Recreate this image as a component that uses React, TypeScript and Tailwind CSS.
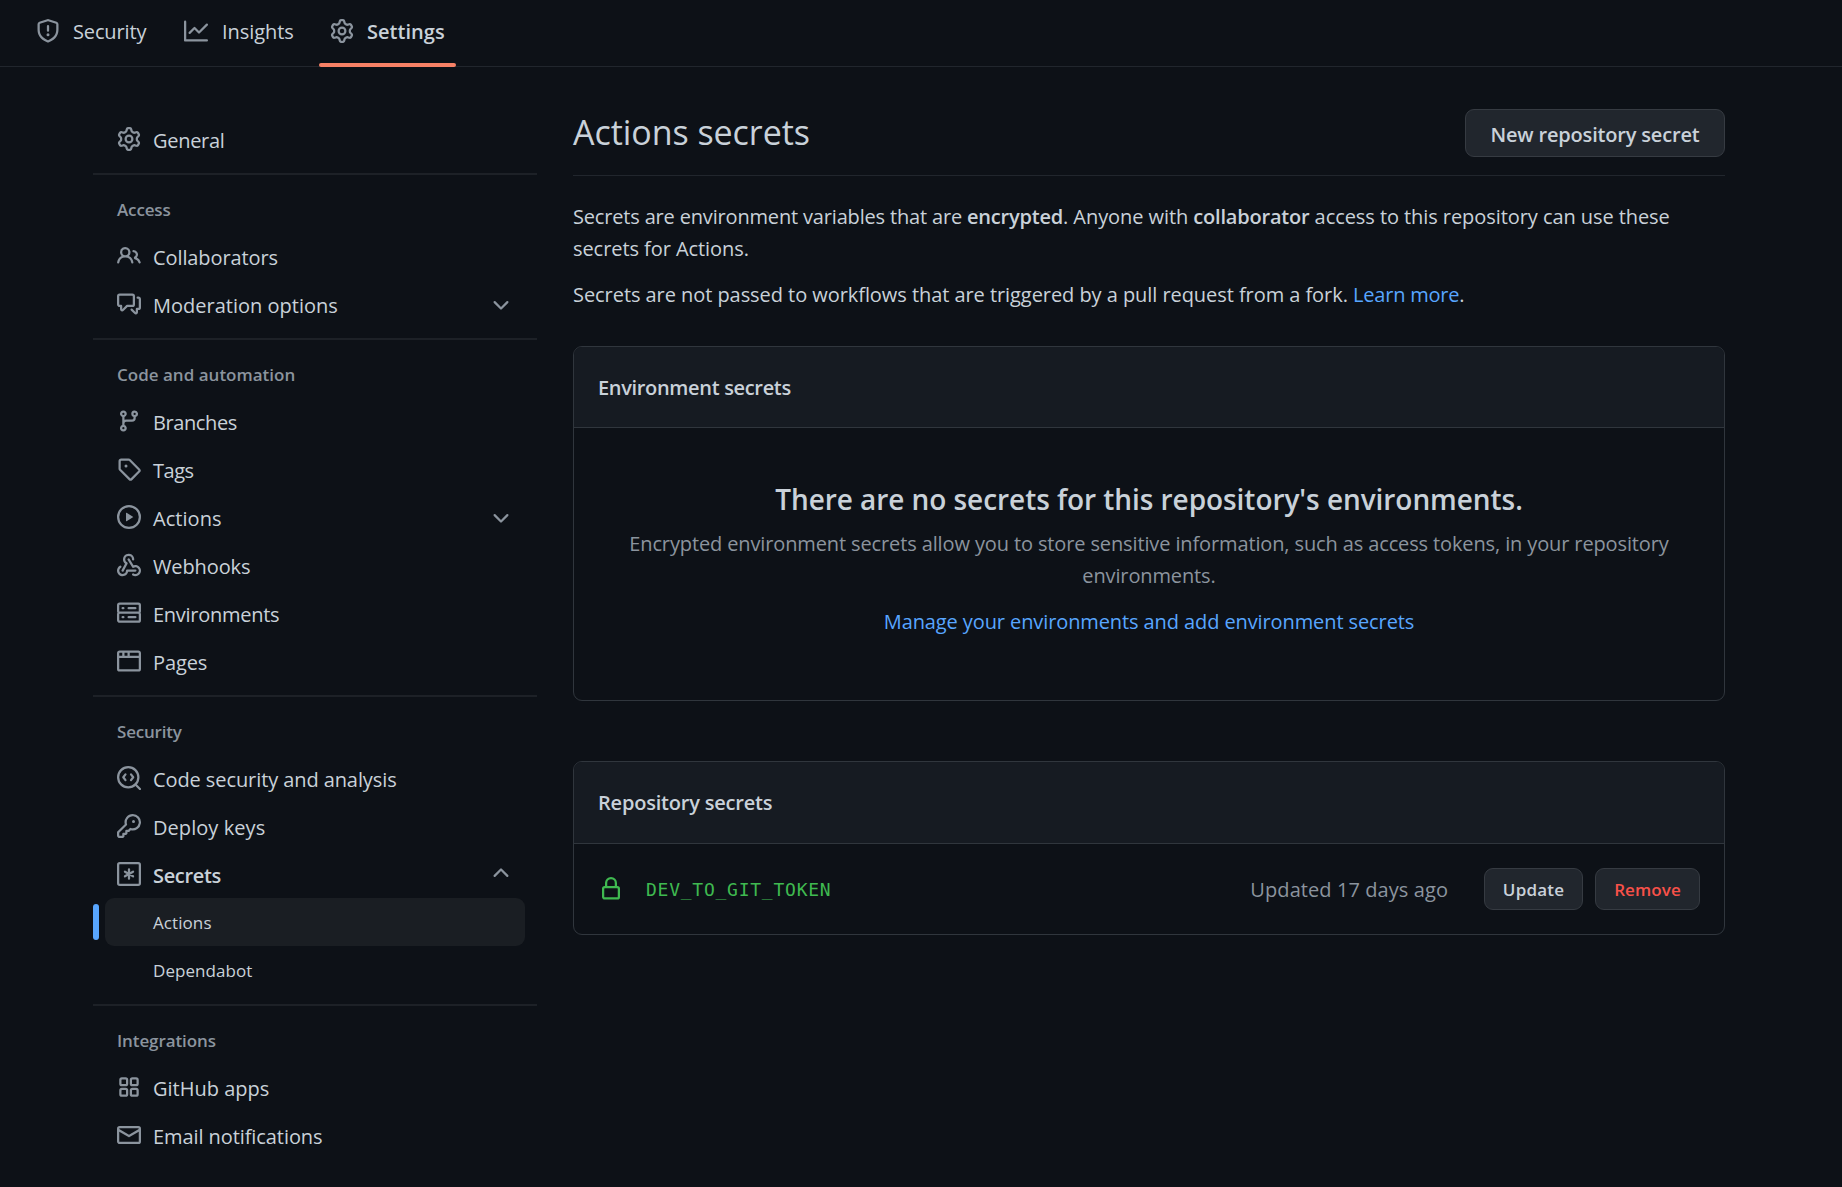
import type { ReactNode } from "react";

/* 16-unit outline icons, drawn at 24px */
const paths = {
  shield:
    "M7.467.133a1.75 1.75 0 011.066 0l5.25 1.68A1.75 1.75 0 0115 3.48V7c0 1.566-.32 3.182-1.303 4.682-.983 1.498-2.585 2.813-5.032 3.855a1.7 1.7 0 01-1.33 0c-2.447-1.042-4.049-2.357-5.032-3.855C1.32 10.182 1 8.566 1 7V3.48a1.75 1.75 0 011.217-1.667l5.25-1.68zm.61 1.429a.25.25 0 00-.153 0l-5.25 1.68a.25.25 0 00-.174.238V7c0 1.358.275 2.666 1.057 3.86.784 1.194 2.121 2.34 4.366 3.297a.2.2 0 00.154 0c2.245-.956 3.582-2.104 4.366-3.298C13.225 9.666 13.5 8.36 13.5 7V3.48a.25.25 0 00-.174-.237l-5.25-1.68zM9 10.5a1 1 0 11-2 0 1 1 0 012 0zm-.25-5.75a.75.75 0 10-1.5 0v3a.75.75 0 001.5 0v-3z",
  graph:
    "M1.5 1.75a.75.75 0 00-1.5 0v12.5c0 .414.336.75.75.75h14.5a.75.75 0 000-1.5H1.5V1.75zm14.28 2.53a.75.75 0 00-1.06-1.06L10 7.94 7.53 5.47a.75.75 0 00-1.06 0L3.22 8.72a.75.75 0 001.06 1.06L7 7.06l2.47 2.47a.75.75 0 001.06 0l5.25-5.25z",
  gear:
    "M7.429 1.525a6.593 6.593 0 011.142 0c.036.003.108.036.137.146l.289 1.105c.147.56.55.967.997 1.189.174.086.341.183.501.29.417.278.97.423 1.53.27l1.102-.303c.11-.03.175.016.195.046.219.31.41.641.573.989.014.031.022.11-.059.19l-.815.806c-.411.406-.562.957-.53 1.456a4.588 4.588 0 010 .582c-.032.499.119 1.05.53 1.456l.815.806c.08.08.073.159.059.19a6.494 6.494 0 01-.573.99c-.02.029-.086.074-.195.045l-1.103-.303c-.559-.153-1.112-.008-1.529.27-.16.107-.327.204-.5.29-.449.222-.851.628-.998 1.189l-.289 1.105c-.029.11-.101.143-.137.146a6.613 6.613 0 01-1.142 0c-.036-.003-.108-.037-.137-.146l-.289-1.105c-.147-.56-.55-.967-.997-1.189a4.502 4.502 0 01-.501-.29c-.417-.278-.97-.423-1.53-.27l-1.102.303c-.11.03-.175-.016-.195-.046a6.492 6.492 0 01-.573-.989c-.014-.031-.022-.11.059-.19l.815-.806c.411-.406.562-.957.53-1.456a4.587 4.587 0 010-.582c.032-.499-.119-1.05-.53-1.456l-.815-.806c-.08-.08-.073-.159-.059-.19a6.44 6.44 0 01.573-.99c.02-.029.086-.075.195-.045l1.103.303c.559.153 1.112.008 1.529-.27.16-.107.327-.204.5-.29.449-.222.851-.628.998-1.189l.289-1.105c.029-.11.101-.143.137-.146zM8 0c-.236 0-.47.01-.701.03-.743.065-1.29.615-1.458 1.261l-.29 1.106c-.017.066-.078.158-.211.224a5.994 5.994 0 00-.668.386c-.123.082-.233.09-.3.071L3.27 2.776c-.644-.177-1.392.02-1.82.63a7.977 7.977 0 00-.704 1.217c-.315.675-.111 1.422.363 1.891l.815.806c.05.048.098.147.088.294a6.084 6.084 0 000 .772c.01.147-.038.246-.088.294l-.815.806c-.474.469-.678 1.216-.363 1.891.2.428.436.835.704 1.218.428.609 1.176.806 1.82.63l1.103-.303c.066-.019.176-.011.299.071.213.143.436.272.668.386.133.066.194.158.212.224l.289 1.106c.169.646.715 1.196 1.458 1.26a8.094 8.094 0 001.402 0c.743-.064 1.29-.614 1.458-1.26l.29-1.106c.017-.066.078-.158.211-.224a5.98 5.98 0 00.668-.386c.123-.082.233-.09.3-.071l1.102.302c.644.177 1.392-.02 1.82-.63.268-.382.505-.789.704-1.217.315-.675.111-1.422-.364-1.891l-.814-.806c-.05-.048-.098-.147-.088-.294a6.1 6.1 0 000-.772c-.01-.147.039-.246.088-.294l.814-.806c.475-.469.679-1.216.364-1.891a7.992 7.992 0 00-.704-1.218c-.428-.609-1.176-.806-1.82-.63l-1.103.303c-.066.019-.176.011-.299-.071a5.991 5.991 0 00-.668-.386c-.133-.066-.194-.158-.212-.224L10.16 1.29C9.99.645 9.444.095 8.701.031A8.094 8.094 0 008 0zm1.5 8a1.5 1.5 0 11-3 0 1.5 1.5 0 013 0zM11 8a3 3 0 11-6 0 3 3 0 016 0z",
  people:
    "M5.5 3.5a2 2 0 100 4 2 2 0 000-4zM2 5.5a3.5 3.5 0 115.898 2.549 5.507 5.507 0 013.034 4.084.75.75 0 11-1.482.235 4.001 4.001 0 00-7.9 0 .75.75 0 01-1.482-.236A5.507 5.507 0 013.102 8.05 3.49 3.49 0 012 5.5zM11 4a.75.75 0 100 1.5 1.5 1.5 0 01.666 2.844.75.75 0 00-.416.672v.352a.75.75 0 00.574.73c1.2.289 2.162 1.2 2.522 2.372a.75.75 0 101.434-.44 5.01 5.01 0 00-2.56-3.012A3 3 0 0011 4z",
  discussion:
    "M1.5 2.75a.25.25 0 01.25-.25h8.5a.25.25 0 01.25.25v5.5a.25.25 0 01-.25.25h-3.5a.75.75 0 00-.53.22L3.5 11.44V9.25a.75.75 0 00-.75-.75h-1a.25.25 0 01-.25-.25v-5.5zM1.75 1A1.75 1.75 0 000 2.75v5.5C0 9.216.784 10 1.75 10H2v1.543a1.457 1.457 0 002.487 1.03L7.061 10h3.189A1.75 1.75 0 0012 8.25v-5.5A1.75 1.75 0 0010.25 1h-8.5zM14.5 4.75a.25.25 0 00-.25-.25h-.5a.75.75 0 110-1.5h.5c.966 0 1.75.784 1.75 1.75v5.5A1.75 1.75 0 0114.25 12H14v1.543a1.457 1.457 0 01-2.487 1.03L9.22 12.28a.75.75 0 111.06-1.06l2.22 2.22v-2.19a.75.75 0 01.75-.75h1a.25.25 0 00.25-.25v-5.5z",
  branch:
    "M11.75 2.5a.75.75 0 100 1.5.75.75 0 000-1.5zm-2.25.75a2.25 2.25 0 113 2.122V6A2.5 2.5 0 0110 8.5H6a1 1 0 00-1 1v1.128a2.251 2.251 0 11-1.5 0V5.372a2.25 2.25 0 111.5 0v1.836A2.492 2.492 0 016 7h4a1 1 0 001-1v-.628A2.25 2.25 0 019.5 3.25zM4.25 12a.75.75 0 100 1.5.75.75 0 000-1.5zM3.5 3.25a.75.75 0 111.5 0 .75.75 0 01-1.5 0z",
  tag:
    "M2.5 7.775V2.75a.25.25 0 01.25-.25h5.025a.25.25 0 01.177.073l6.25 6.25a.25.25 0 010 .354l-5.025 5.025a.25.25 0 01-.354 0l-6.25-6.25a.25.25 0 01-.073-.177zm-1.5 0V2.75C1 1.784 1.784 1 2.75 1h5.025c.464 0 .91.184 1.238.513l6.25 6.25a1.75 1.75 0 010 2.474l-5.026 5.026a1.75 1.75 0 01-2.474 0l-6.25-6.25A1.75 1.75 0 011 7.775zM6 5a1 1 0 100 2 1 1 0 000-2z",
  play:
    "M1.5 8a6.5 6.5 0 1113 0 6.5 6.5 0 01-13 0zM8 0a8 8 0 100 16A8 8 0 008 0zM6.379 5.227A.25.25 0 006 5.442v5.117a.25.25 0 00.379.214l4.264-2.559a.25.25 0 000-.428L6.379 5.227z",
  webhook:
    "M5.5 4.25a2.25 2.25 0 014.5 0 .75.75 0 001.5 0 3.75 3.75 0 10-6.14 2.889l-2.272 4.258a.75.75 0 001.324.706L7 7.25a.75.75 0 00-.309-1.015A2.25 2.25 0 015.5 4.25zM7.364 3.607a.75.75 0 011.03.257l2.608 4.349a3.75 3.75 0 11-.628 6.785.75.75 0 01.752-1.299 2.25 2.25 0 10-.033-3.88.75.75 0 01-1.03-.256L7.107 4.636a.75.75 0 01.257-1.03zM2.9 8.776A.75.75 0 012.625 9.8 2.25 2.25 0 106 11.75a.75.75 0 01.75-.751h5.5a.75.75 0 010 1.5H7.425a3.751 3.751 0 11-5.55-3.998.75.75 0 011.024.274z",
  server:
    "M1.75 1A1.75 1.75 0 000 2.75v4c0 .372.116.717.314 1a1.742 1.742 0 00-.314 1v4c0 .966.784 1.75 1.75 1.75h12.5A1.75 1.75 0 0016 12.75v-4c0-.372-.116-.717-.314-1 .198-.283.314-.628.314-1v-4A1.75 1.75 0 0014.25 1H1.75zm0 7.5a.25.25 0 00-.25.25v4c0 .138.112.25.25.25h12.5a.25.25 0 00.25-.25v-4a.25.25 0 00-.25-.25H1.75zM1.5 2.75a.25.25 0 01.25-.25h12.5a.25.25 0 01.25.25v4a.25.25 0 01-.25.25H1.75a.25.25 0 01-.25-.25v-4zm5.5 2A.75.75 0 017.75 4h4.5a.75.75 0 010 1.5h-4.5A.75.75 0 017 4.75zM7.75 10a.75.75 0 000 1.5h4.5a.75.75 0 000-1.5h-4.5zM3 4.75A.75.75 0 013.75 4h.5a.75.75 0 010 1.5h-.5A.75.75 0 013 4.75zM3.75 10a.75.75 0 000 1.5h.5a.75.75 0 000-1.5h-.5z",
  browser:
    "M0 2.75C0 1.784.784 1 1.75 1h12.5c.966 0 1.75.784 1.75 1.75v10.5A1.75 1.75 0 0114.25 15H1.75A1.75 1.75 0 010 13.25V2.75zm1.75-.25a.25.25 0 00-.25.25V4.5h2v-2H1.75zM5 2.5v2h2v-2H5zm3.5 0v2h6V2.75a.25.25 0 00-.25-.25H8.5zm6 3.5h-13v7.25c0 .138.112.25.25.25h12.5a.25.25 0 00.25-.25V6z",
  key:
    "M6.5 5.5a4 4 0 112.731 3.795.75.75 0 00-.768.18L7.44 10.5H6.25a.75.75 0 00-.75.75v1.19l-.06.06H4.25a.75.75 0 00-.75.75v1.19l-.06.06H1.75a.25.25 0 01-.25-.25v-1.69l5.024-5.023a.75.75 0 00.181-.768A3.995 3.995 0 016.5 5.5zm4-5.5a5.5 5.5 0 00-5.348 6.788L.22 11.72a.75.75 0 00-.22.53v2C0 15.216.784 16 1.75 16h2a.75.75 0 00.53-.22l.5-.5a.75.75 0 00.22-.53V14h.75a.75.75 0 00.53-.22l.5-.5a.75.75 0 00.22-.53V12h.75a.75.75 0 00.53-.22l.932-.932A5.5 5.5 0 1010.5 0zm.5 6a1 1 0 100-2 1 1 0 000 2z",
  mail:
    "M1.75 2A1.75 1.75 0 000 3.75v.736a.75.75 0 000 .027v7.737C0 13.216.784 14 1.75 14h12.5A1.75 1.75 0 0016 12.25v-8.5A1.75 1.75 0 0014.25 2H1.75zM14.5 4.07v-.32a.25.25 0 00-.25-.25H1.75a.25.25 0 00-.25.25v.32L8 7.88l6.5-3.81zm-13 1.74v6.441c0 .138.112.25.25.25h12.5a.25.25 0 00.25-.25V5.809L8.38 9.397a.75.75 0 01-.76 0L1.5 5.809z",
  lock:
    "M4 4v2h-.25A1.75 1.75 0 002 7.75v5.5c0 .966.784 1.75 1.75 1.75h8.5A1.75 1.75 0 0014 13.25v-5.5A1.75 1.75 0 0012.25 6H12V4a4 4 0 10-8 0zm6.5 2V4a2.5 2.5 0 10-5 0v2h5zM12 7.5h.25a.25.25 0 01.25.25v5.5a.25.25 0 01-.25.25h-8.5a.25.25 0 01-.25-.25v-5.5a.25.25 0 01.25-.25H12z",
  down:
    "M12.78 6.22a.75.75 0 010 1.06l-4.25 4.25a.75.75 0 01-1.06 0L3.22 7.28a.75.75 0 011.06-1.06L8 9.94l3.72-3.72a.75.75 0 011.06 0z",
  up:
    "M3.22 9.78a.75.75 0 010-1.06l4.25-4.25a.75.75 0 011.06 0l4.25 4.25a.75.75 0 01-1.06 1.06L8 6.06 4.28 9.78a.75.75 0 01-1.06 0z",
};

type PathName = keyof typeof paths;
type IconName = PathName | "codescan" | "asterisk" | "apps";

const strokes: Record<string, ReactNode> = {
  codescan: (
    <>
      <circle cx="7.5" cy="7.5" r="6.75" />
      <path d="M12.3 12.3l3 3" />
      <path d="M5.65 5.6L4.2 7.5l1.45 1.9M9.35 5.6l1.45 1.9-1.45 1.9" />
    </>
  ),
  asterisk: (
    <>
      <rect x=".75" y=".75" width="14.5" height="14.5" rx="1.1" />
      <path d="M8 4.9v6.2M5.3 6.45l5.4 3.1M10.7 6.45L5.3 9.55" />
    </>
  ),
  apps: (
    <>
      <rect x="2.25" y="2.25" width="4.5" height="4.5" rx="1" />
      <rect x="9.25" y="2.25" width="4.5" height="4.5" rx="1" />
      <rect x="2.25" y="9.25" width="4.5" height="4.5" rx="1" />
      <rect x="9.25" y="9.25" width="4.5" height="4.5" rx="1" />
    </>
  ),
};

function Icon({ name, className = "text-[#8b949e]" }: { name: IconName; className?: string }) {
  return (
    <svg viewBox="0 0 16 16" className={`size-6 shrink-0 ${className}`} aria-hidden="true">
      {name in strokes ? (
        <g fill="none" stroke="currentColor" strokeWidth="1.5" strokeLinecap="round" strokeLinejoin="round">
          {strokes[name]}
        </g>
      ) : (
        <path fill="currentColor" fillRule="evenodd" d={paths[name as PathName]} />
      )}
    </svg>
  );
}

type Item = { icon: IconName; label: string; track: string; chevron?: "down" | "up"; bold?: boolean };

function NavRow({ icon, label, track, chevron, bold }: Item) {
  return (
    <a className="flex h-12 items-center pl-6 pr-6">
      <Icon name={icon} />
      <span className={`ml-3 flex-1 whitespace-nowrap pt-1 ${track} ${bold ? "font-semibold" : ""}`}>{label}</span>
      {chevron && <Icon name={chevron} />}
    </a>
  );
}

function Group({ title, track, children }: { title: string; track: string; children: ReactNode }) {
  return (
    <section className="mt-2.5 border-t-2 border-[#1d2127]">
      <h3 className={`flex h-[57px] items-center pb-[12px] pl-6 pt-[25px] text-[17px] font-semibold leading-5 text-[#8b949e] ${track}`}>
        {title}
      </h3>
      {children}
    </section>
  );
}

function Tab({ icon, label, track, gap }: { icon: IconName; label: string; track: string; gap: string }) {
  return (
    <a className={`flex items-center ${gap}`}>
      <Icon name={icon} />
      <span className={`pt-0.5 ${track}`}>{label}</span>
    </a>
  );
}

const code: Item[] = [
  { icon: "branch", label: "Branches", track: "tracking-[-0.4px]" },
  { icon: "tag", label: "Tags", track: "tracking-[-0.5px]" },
  { icon: "play", label: "Actions", track: "tracking-[0.05px]", chevron: "down" },
  { icon: "webhook", label: "Webhooks", track: "tracking-[-0.11px]" },
  { icon: "server", label: "Environments", track: "tracking-[-0.27px]" },
  { icon: "browser", label: "Pages", track: "tracking-[-0.12px]" },
];

export default function App() {
  return (
    <div className="h-[1187px] w-[1842px] overflow-hidden bg-[#0d1117] font-['Open_Sans',sans-serif] text-[20px] leading-8 text-[#c9d1d9]">
      <nav className="flex h-[67px] border-b border-[#21262d] pl-9">
        <div className="flex h-16 items-center gap-9 pb-0.5">
          <Tab icon="shield" label="Security" track="w-[75px] tracking-[-0.14px]" gap="gap-[13px]" />
          <Tab icon="graph" label="Insights" track="w-[74px] tracking-[-0.07px]" gap="gap-3.5" />
        </div>
        <div className="relative ml-[23px] flex h-16 w-[137px] items-center justify-start pb-0.5 pl-[11px]">
          <Tab icon="gear" label="Settings" track="font-semibold tracking-[0.04px]" gap="gap-[13px]" />
          <div className="absolute inset-x-0 top-[63px] h-[3.5px] rounded-sm bg-[#f78166]" />
        </div>
      </nav>

      <div className="flex">
        <aside className="ml-[93px] mt-12 w-[444px]">
          <NavRow icon="gear" label="General" track="tracking-[-0.3px]" />
          <Group title="Access" track="tracking-[-0.14px]">
            <NavRow icon="people" label="Collaborators" track="tracking-[-0.1px]" />
            <NavRow icon="discussion" label="Moderation options" track="tracking-[0.01px]" chevron="down" />
          </Group>
          <Group title="Code and automation" track="tracking-[0.01px]">
            {code.map((i) => (
              <NavRow key={i.label} {...i} />
            ))}
          </Group>
          <Group title="Security" track="tracking-[-0.2px]">
            <NavRow icon="codescan" label="Code security and analysis" track="tracking-[-0.09px]" />
            <NavRow icon="key" label="Deploy keys" track="tracking-[0.06px]" />
            <NavRow icon="asterisk" label="Secrets" track="tracking-[-0.33px]" chevron="up" bold />
            <div className="flex h-12 items-center gap-1.5 text-[17px]">
              <div className="h-9 w-1.5 rounded-[3px] bg-[#58a6ff]" />
              <a className="flex h-12 w-[420px] items-center rounded-[9px] bg-[#1a1e23] pl-12 pt-px tracking-[0.08px]">Actions</a>
            </div>
            <a className="flex h-12 items-center pl-[60px] pt-px text-[17px] tracking-[0.05px]">Dependabot</a>
          </Group>
          <Group title="Integrations" track="tracking-[-0.1px]">
            <NavRow icon="apps" label="GitHub apps" track="tracking-[0px]" />
            <NavRow icon="mail" label="Email notifications" track="tracking-[-0.08px]" />
          </Group>
        </aside>

        <main className="ml-9 mt-[42px] w-[1152px]">
          <header className="flex h-[67px] items-start justify-between border-b border-[#21262d]">
            <h1 className="text-[34px] leading-[47px] tracking-[-0.05px]">Actions secrets</h1>
            <button className="h-12 w-[260px] rounded-[9px] border border-[#363b42] bg-[#21262d] pt-[3px] font-semibold tracking-[-0.18px]">
              New repository secret
            </button>
          </header>
          <p className="mt-[25px] tracking-[-0.07px]">
            <span className="tracking-[-0.17px]">Secrets are environment variables that are </span>
            <b className="font-semibold tracking-[-0.2px]">encrypted</b>. Anyone with{" "}
            <b className="font-semibold tracking-[-0.2px]">collaborator</b> access to this repository can use these
            <br />
            secrets for Actions.
          </p>
          <p className="mt-3.5 tracking-[-0.06px]">
            Secrets are not passed to workflows that are triggered by a pull request from a fork.{" "}
            <a className="tracking-[-0.2px] text-[#58a6ff]">Learn more</a>.
          </p>

          <section className="mt-[35px] h-[355px] overflow-hidden rounded-[9px] border border-[#30363d]">
            <h2 className="flex h-[81px] items-center border-b border-[#30363d] bg-[#161b22] pl-6 pt-px font-semibold tracking-[-0.33px]">
              Environment secrets
            </h2>
            <div className="pt-[50px] text-center">
              <h3 className="whitespace-nowrap text-[28px] font-semibold leading-[42px] tracking-[-0.06px]">
                There are no secrets for this repository's environments.
              </h3>
              <p className="mt-2 tracking-[-0.124px] text-[#8b949e]">
                Encrypted environment secrets allow you to store sensitive information, such as access tokens, in your repository
                <br />
                environments.
              </p>
              <a className="mt-3.5 block tracking-[-0.1px] text-[#58a6ff]">Manage your environments and add environment secrets</a>
            </div>
          </section>

          <section className="mt-[60px] h-[174px] overflow-hidden rounded-[9px] border border-[#30363d]">
            <h2 className="flex h-[82px] items-center border-b border-[#30363d] bg-[#161b22] pl-6 pt-px font-semibold tracking-[-0.2px]">
              Repository secrets
            </h2>
            <div className="flex h-[90px] items-center pl-[25px] pr-6">
              <Icon name="lock" className="text-[#3fb950]" />
              <code className="ml-[23px] flex-1 pt-0.5 font-['DejaVu_Sans_Mono',monospace] text-[18px] tracking-[0.75px] text-[#3fb950]">
                DEV_TO_GIT_TOKEN
              </code>
              <span className="mr-9 pt-px tracking-[0.08px] text-[#8b949e]">Updated 17 days ago</span>
              <button className="mr-3 h-[42px] w-[99px] rounded-[9px] border border-[#363b42] bg-[#21262d] pt-px text-[17px] font-semibold tracking-[0.2px]">
                Update
              </button>
              <button className="h-[42px] w-[105px] rounded-[9px] border border-[#363b42] bg-[#21262d] pt-px text-[17px] font-semibold tracking-[0.1px] text-[#f85149]">
                Remove
              </button>
            </div>
          </section>
        </main>
      </div>
    </div>
  );
}
